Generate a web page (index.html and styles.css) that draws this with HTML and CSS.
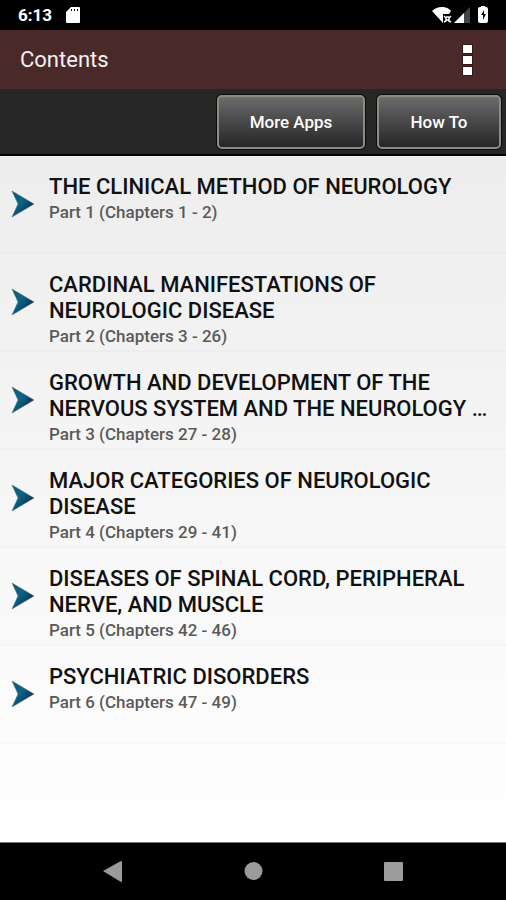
FILE: index.html
```html
<!DOCTYPE html>
<html lang="en">
<head>
<meta charset="utf-8">
<meta name="viewport" content="width=device-width, initial-scale=1">
<title>Contents</title>
<link rel="stylesheet" href="styles.css">
</head>
<body>
<div class="status">
  <time class="clock">6:13</time>
  <svg class="sd" width="14" height="16" viewBox="0 0 14 16"><path fill="#fff" fill-rule="evenodd" d="M5 0h8q1 0 1 1v14q0 1-1 1H1q-1 0-1-1V5zM5 2v2h1V2zm3 0v2h1V2zm3 0v2h1V2z"/></svg>
  <svg class="signals" width="58" height="18" viewBox="0 0 58 18">
    <path fill="#fff" d="M0 5Q4 1 10 1t9 4l-2 3h-6v9z"/>
    <path fill="none" stroke="#fff" stroke-width="1.5" d="M12 10l2 2v3l-2 1M19 10l-2 2v3l2 1M14 11h3M14 14h3"/>
    <path fill="#444" d="M38 1v16H22z"/>
    <path fill="#fff" d="M32 7v10H22z"/>
    <path fill="#fff" d="M48 1h1V0h4v1h1q2 0 2 2v12q0 2-2 2h-6q-2 0-2-2V3q0-2 2-2z"/>
    <path fill="#111" d="M52 4l-3 5h2v5l3-6h-2z"/>
  </svg>
</div>
<header class="appbar">
  <h1>Contents</h1>
  <button class="more" aria-label="More options"><span></span><span></span><span></span></button>
</header>
<nav class="tools">
  <button class="tool apps">More Apps</button>
  <button class="tool">How To</button>
</nav>
<main>
  <ul class="list">
    <li><a class="row" href="#part1"><svg class="arrow" viewBox="0 0 24 28"><use href="#dart"/></svg><span class="text"><span class="title">THE CLINICAL METHOD OF NEUROLOGY</span><span class="sub">Part 1 (Chapters 1 - 2)</span></span></a></li>
    <li><a class="row" href="#part2"><svg class="arrow" viewBox="0 0 24 28"><use href="#dart"/></svg><span class="text"><span class="title">CARDINAL MANIFESTATIONS OF NEUROLOGIC DISEASE</span><span class="sub">Part 2 (Chapters 3 - 26)</span></span></a></li>
    <li><a class="row" href="#part3"><svg class="arrow" viewBox="0 0 24 28"><use href="#dart"/></svg><span class="text"><span class="title">GROWTH AND DEVELOPMENT OF THE NERVOUS SYSTEM AND THE NEUROLOGY&nbsp;…</span><span class="sub">Part 3 (Chapters 27 - 28)</span></span></a></li>
    <li><a class="row" href="#part4"><svg class="arrow" viewBox="0 0 24 28"><use href="#dart"/></svg><span class="text"><span class="title">MAJOR CATEGORIES OF NEUROLOGIC DISEASE</span><span class="sub">Part 4 (Chapters 29 - 41)</span></span></a></li>
    <li><a class="row" href="#part5"><svg class="arrow" viewBox="0 0 24 28"><use href="#dart"/></svg><span class="text"><span class="title">DISEASES OF SPINAL CORD, PERIPHERAL NERVE, AND MUSCLE</span><span class="sub">Part 5 (Chapters 42 - 46)</span></span></a></li>
    <li><a class="row" href="#part6"><svg class="arrow" viewBox="0 0 24 28"><use href="#dart"/></svg><span class="text"><span class="title">PSYCHIATRIC DISORDERS</span><span class="sub">Part 6 (Chapters 47 - 49)</span></span></a></li>
  </ul>
</main>
<footer class="navbar">
  <button aria-label="Back"><svg width="20" height="22" viewBox="0 0 20 22"><path fill="#9b9b9b" d="M18 0q1 0 1 1v19q0 1-1 1L0 10z"/></svg></button>
  <button aria-label="Home"><svg width="20" height="22" viewBox="0 0 20 22"><circle cx="10.500" cy="10" r="9" fill="#9b9b9b"/></svg></button>
  <button aria-label="Recent apps"><svg width="20" height="22" viewBox="0 0 20 22"><rect x="1" y="1" width="19" height="19" rx="1" fill="#9b9b9b"/></svg></button>
</footer>
<svg class="defs" width="0" height="0" aria-hidden="true">
  <defs>
    <linearGradient id="blue" x1="0" y1="0" x2="1" y2="1"><stop offset="0" stop-color="#204f66"/><stop offset=".4" stop-color="#07678a"/><stop offset=".8" stop-color="#102e4c"/></linearGradient>
    <path id="dart" fill="url(#blue)" stroke="#52656f" stroke-width=".5" d="M1 1L23 14 1 27 7 14z"/>
  </defs>
</svg>
</body>
</html>
```
FILE: styles.css
```css
* { box-sizing: border-box; }

body {
  margin: 0;
  min-height: 100vh;
  display: flex;
  flex-direction: column;
  background: #000;
  font-family: Roboto, "Liberation Sans", sans-serif;
}

button {
  margin: 0;
  padding: 0;
  border: 0;
  background: none;
  font: inherit;
}

svg { display: block; }

.status {
  display: flex;
  align-items: center;
  height: 30px;
  padding: 0 16px 0 18px;
  color: #fff;
}

.clock {
  font-size: 17px;
  font-weight: 700;
  line-height: 32px;
}

.sd { margin-left: 14px; }

.signals { margin-left: auto; }

.appbar {
  display: flex;
  align-items: center;
  justify-content: space-between;
  height: 59px;
  padding: 0 28px 0 20px;
  background: #4a2929;
  color: #f5f1f1;
}

.appbar h1 {
  margin: 0;
  font-size: 22px;
  font-weight: 400;
  line-height: 26px;
}

.more {
  display: grid;
  gap: 3px;
  padding: 0 6px;
}

.more span {
  width: 9px;
  height: 8px;
  background: #fff;
  box-shadow: 0 0 0 1px #351717;
}

.tools {
  display: flex;
  justify-content: flex-end;
  gap: 12px;
  padding: 6px 5px 5px;
  border-bottom: 2px solid #000;
  background: #262626;
}

.tool {
  width: 124px;
  height: 54px;
  border: 2px solid #8c8c80;
  border-radius: 5px;
  background: linear-gradient(#6c6c6c, #484848 50%, #262626);
  box-shadow: 0 0 0 1px #0c0c0c;
  color: #fff;
  font-size: 17px;
  font-weight: 500;
}

.tool.apps { width: 148px; }

main {
  flex: 1;
  background: linear-gradient(#ededed, #fff);
}

.list {
  margin: 0;
  padding: 0;
  list-style: none;
}

.row {
  display: flex;
  align-items: center;
  gap: 14px;
  height: 98px;
  padding: 0 8px 0 11px;
  border-bottom: 2px solid rgba(0, 0, 0, 0.02);
  color: #111;
  text-decoration: none;
}

.arrow {
  flex: none;
  width: 24px;
  height: 28px;
}

.text {
  flex: 1;
  align-self: flex-start;
  padding-top: 18px;
}

.title,
.sub { display: block; }

.title {
  font-size: 22px;
  font-weight: 500;
  line-height: 26px;
}

.sub {
  color: #5a5a5a;
  font-size: 17px;
  font-weight: 500;
  line-height: 25px;
}

.navbar {
  display: flex;
  justify-content: center;
  gap: 120px;
  height: 58px;
  border-top: 1px solid #777;
}

.defs { position: absolute; }
```
